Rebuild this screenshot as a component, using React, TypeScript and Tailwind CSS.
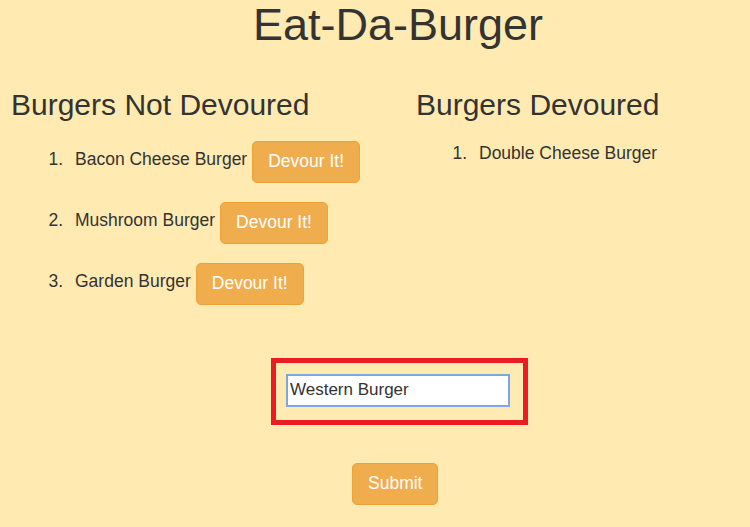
import { useState } from 'react'

const NOT_DEVOURED = ['Bacon Cheese Burger', 'Mushroom Burger', 'Garden Burger']
const DEVOURED = ['Double Cheese Burger']

const FONT = "font-['Liberation_Sans',Arial,sans-serif]"

function DevourButton({ label }: { label: string }) {
  return (
    <button className="h-[42px] px-[15px] rounded-[5px] border border-[#eea236] bg-[#f0ad4e] text-white text-[17.5px] leading-none">
      {label}
    </button>
  )
}

export default function App() {
  const [name, setName] = useState('Western Burger')

  return (
    <div className={`w-[750px] h-[527px] overflow-hidden bg-[#ffebb1] text-[#333] ${FONT}`}>
      <div className="w-[796px]">
        <h1 className="text-center text-[45px] leading-[1.1] font-normal">Eat-Da-Burger</h1>

        <div className="flex mt-[38px]">
          {/* Not devoured */}
          <div className="w-[416px] pl-[11px]">
            <h3 className="text-[30px] leading-[1.1] font-normal">Burgers Not Devoured</h3>
            <ol className="mt-[20px] flex flex-col gap-[19px]">
              {NOT_DEVOURED.map((b, i) => (
                <li key={b} className="flex items-center h-[42px] text-[17.5px]">
                  <span className="w-[64px] shrink-0 text-right pr-[12px] mb-[4px]">{i + 1}.</span>
                  <span className="mb-[4px] mr-[5px]">{b}</span>
                  <DevourButton label="Devour It!" />
                </li>
              ))}
            </ol>
          </div>

          {/* Devoured */}
          <div className="flex-1">
            <h3 className="text-[30px] leading-[1.1] font-normal">Burgers Devoured</h3>
            <ol className="mt-[20px]">
              {DEVOURED.map((b, i) => (
                <li key={b} className="flex text-[17.5px] leading-[25px]">
                  <span className="w-[63px] shrink-0 text-right pr-[12px]">{i + 1}.</span>
                  <span>{b}</span>
                </li>
              ))}
            </ol>
          </div>
        </div>

        <form className="mt-[53px]" onSubmit={(e) => e.preventDefault()}>
          <div className="ml-[271px] w-[257px] h-[67px] border-[5px] border-[#ed1c24] pl-[10px] pt-[11px]">
            <input
              value={name}
              onChange={(e) => setName(e.target.value)}
              className="block w-[224px] h-[33px] bg-white border-2 border-[#7ea7e2] px-[2px] text-[17px] text-[#333] outline-none"
            />
          </div>
          <button
            type="submit"
            className="mt-[38px] ml-[352px] h-[42px] px-[15px] rounded-[5px] border border-[#eea236] bg-[#f0ad4e] text-white text-[17.5px] leading-none"
          >
            Submit
          </button>
        </form>
      </div>
    </div>
  )
}
